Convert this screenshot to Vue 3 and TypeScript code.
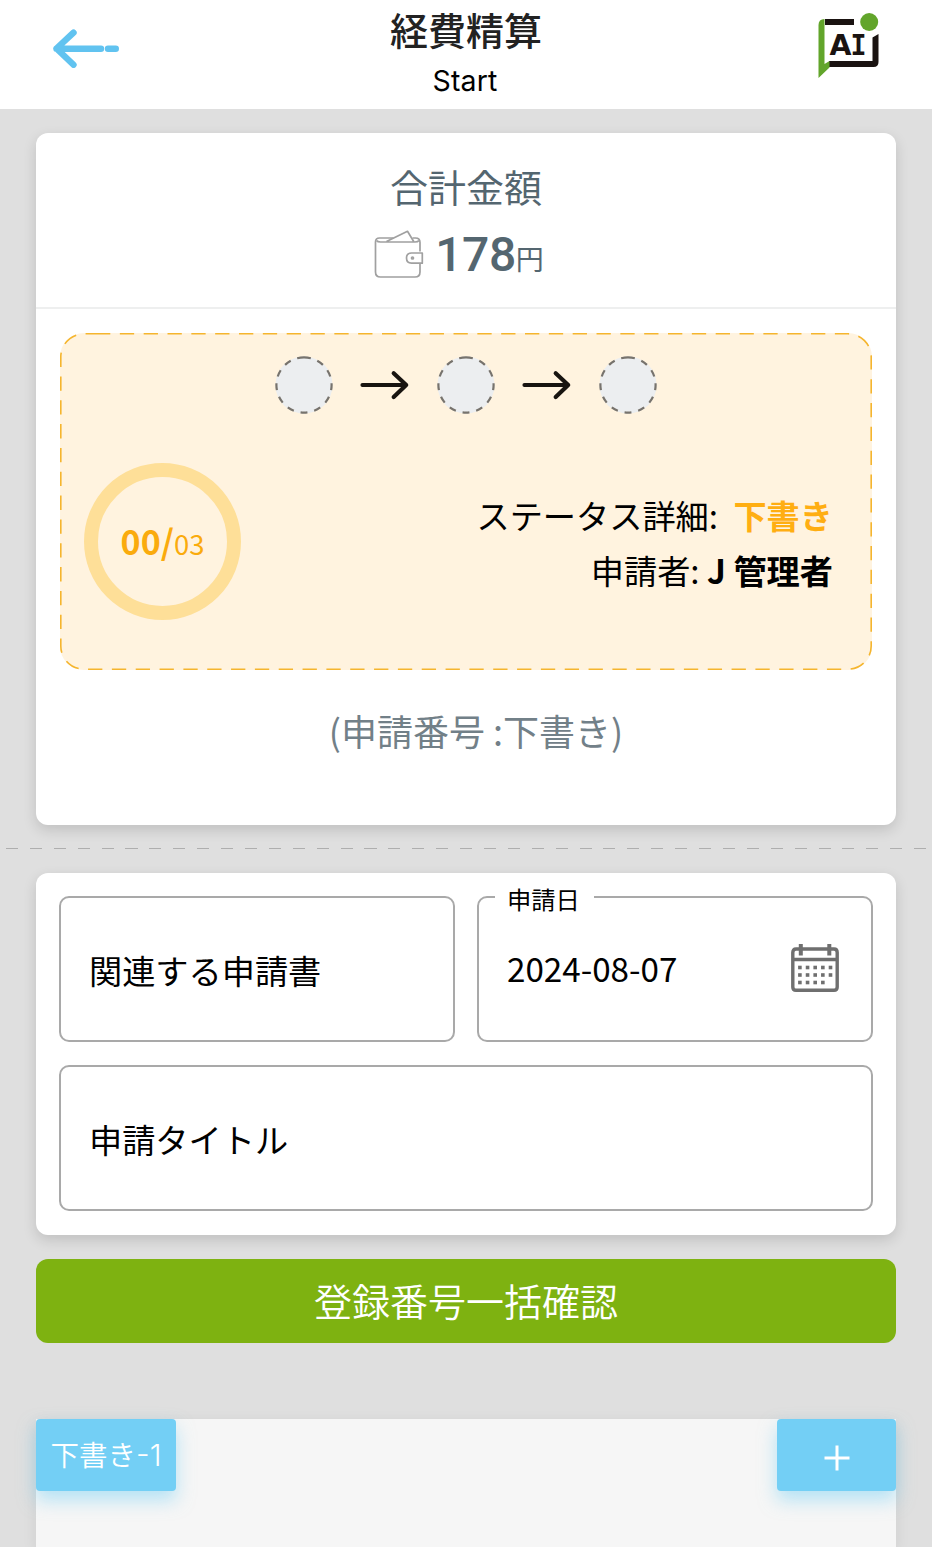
<script setup lang="ts">
import { ref } from 'vue'

interface Step {
  id: number
}

const steps: Step[] = [{ id: 1 }, { id: 2 }, { id: 3 }]
const total = ref<number>(178)
const done = ref<string>('00')
const count = ref<string>('03')
const date = ref<string>('2024-08-07')

const dots: { x: number; y: number }[] = []
for (let row = 0; row < 3; row++) {
  for (let col = 0; col < 5; col++) {
    if (row === 2 && col === 4) continue
    dots.push({ x: 7.1 + col * 7.65, y: 21.7 + row * 7.5 })
  }
}
</script>

<template>
  <div class="page">
    <header class="topbar">
      <svg class="back" width="68" height="40" viewBox="0 0 68 40" fill="none" stroke="#61c3f0" stroke-width="6.4" stroke-linecap="round" stroke-linejoin="round">
        <path d="M22.500 4.700L5.500 20.500L22.500 36.700M5.500 20.700H50M57 20.700H64.800" />
      </svg>
      <div class="heading">
        <h1>経費精算</h1>
        <p>Start</p>
      </div>
      <svg class="logo" width="62" height="68" viewBox="0 0 62 68">
        <path d="M7 6H36V12H7Z" fill="#1a1311" />
        <path d="M54.500 24.500L60.500 21V49Q60.500 54 55.500 54H11V48H54.500Z" fill="#1a1311" />
        <path d="M6.500 6V51L11.500 48V54.500L0.500 65V12Q0.500 6 6.500 6Z" fill="#62a52b" />
        <circle cx="51.200" cy="9" r="9" fill="#62a52b" />
        <text class="logo-a" x="11.600" y="42" textLength="22" lengthAdjust="spacingAndGlyphs">A</text>
        <text class="logo-i" x="32.500" y="42" textLength="16" lengthAdjust="spacingAndGlyphs">I</text>
      </svg>
    </header>

    <section class="card summary">
      <div class="total">
        <h2>合計金額</h2>
        <div class="amount">
          <svg width="50" height="50" viewBox="0 0 50 50" fill="none" stroke="#a0a0a0" stroke-width="1.7" stroke-linejoin="round">
            <path d="M46 21.500V12.500Q46 8 41.500 8H38.500M19.500 8H5.500Q1.500 8 1.500 12V42Q1.500 47 6.500 47H41Q46 47 46 42V33.500" />
            <path d="M2.500 10.500Q3.500 12 6.500 12H41Q44 12 45 10.500M12.500 11.500L33.500 1.300L40 12" />
            <path d="M48.300 23H37.500Q32.500 23 32.500 28T37.500 33.200H48.300Z" />
            <circle cx="38.500" cy="28" r="1" />
          </svg>
          <span class="sum">{{ total }}</span><span class="yen">円</span>
        </div>
      </div>

      <div class="status">
        <svg class="outline" width="812" height="337" viewBox="0 0 812 337" fill="none">
          <path d="M36 .8H788A23.200 23.200 0 0 1 811.200 24V313A23.200 23.200 0 0 1 788 336.200H24A23.200 23.200 0 0 1 .8 313V24A23.200 23.200 0 0 1 24 .8H36" pathLength="2266.500" stroke="#f5b52e" stroke-width="1.600" stroke-dasharray="14.400 9.600" />
        </svg>
        <div class="steps">
          <template v-for="(step, i) in steps" :key="step.id">
            <svg v-if="i > 0" class="arrow" width="50" height="30" viewBox="0 0 50 30" fill="none" stroke="#181410" stroke-width="4.200" stroke-linecap="round" stroke-linejoin="round">
              <path d="M2.500 15H46.200M33.700 3.300L46.200 15L33.700 27" />
            </svg>
            <svg width="58" height="58" viewBox="0 0 58 58">
              <circle cx="29" cy="29" r="28.500" fill="#eceef0" />
              <circle cx="29" cy="29" r="27.600" fill="none" stroke="#77736d" stroke-width="2.200" pathLength="25" stroke-dasharray="1 1" transform="rotate(-90 29 29)" />
            </svg>
          </template>
        </div>
        <div class="detail">
          <div class="ring">
            <b>{{ done }}/</b><span>{{ count }}</span>
          </div>
          <div class="lines">
            <p>ステータス詳細: <b class="draft">下書き</b></p>
            <p class="applicant">申請者: <b>J 管理者</b></p>
          </div>
        </div>
      </div>

      <p class="number">(申請番号 :下書き)</p>
    </section>

    <div class="separator"></div>

    <section class="card form">
      <div class="field"><span>関連する申請書</span></div>
      <div class="field date">
        <label>申請日</label>
        <span>{{ date }}</span>
        <svg width="48" height="49" viewBox="0 0 48 49">
          <path d="M5 5H43Q46.200 5 46.200 8.500V43Q46.200 46.300 43 46.300H5Q1.800 46.300 1.800 43V8.500Q1.800 5 5 5ZM2 15.500H46" fill="none" stroke="#6f6f6f" stroke-width="3.400" />
          <path d="M9.800 0V11.500M38.300 0V11.500" stroke="#6f6f6f" stroke-width="4" />
          <rect v-for="(dot, i) in dots" :key="i" :x="dot.x" :y="dot.y" width="3.600" height="3.600" fill="#6f6f6f" />
        </svg>
      </div>
      <div class="field wide"><span>申請タイトル</span></div>
    </section>

    <button class="confirm" type="button">登録番号一括確認</button>

    <section class="panel">
      <button class="chip tab" type="button"><span>下書き<i>-1</i></span></button>
      <button class="chip add" type="button" aria-label="追加">
        <svg width="26" height="26" viewBox="0 0 26 26" stroke="#fff" stroke-width="3"><path d="M13 .5V25.500M.5 13H25.500" /></svg>
      </button>
    </section>
  </div>
</template>

<style>
body {
  margin: 0;
  background: #dfdfdf;
}
</style>

<style scoped>
.page {
  width: 932px;
  height: 1547px;
  overflow: hidden;
  background: #dfdfdf;
  color: #000;
  font-family: "Noto Sans CJK JP", sans-serif;
  display: flex;
  flex-direction: column;
}
.page * {
  box-sizing: border-box;
}
h1, h2, p {
  margin: 0;
  font-weight: 400;
}
.topbar {
  height: 109px;
  flex: none;
  background: #fff;
  display: grid;
  grid-template-columns: 1fr 300px 1fr;
  padding: 0 52px 0 52px;
}
.back {
  margin-top: 28px;
  margin-left: -1px;
}
.heading {
  text-align: center;
}
h1 {
  font-size: 38px;
  line-height: 56px;
  margin-top: 1px;
  font-weight: 500;
  color: #222;
}
.heading p {
  font: 28.500px/40px Inter, sans-serif;
  letter-spacing: 0.1px;
  margin-top: 4px;
  padding-right: 2px;
}
.logo {
  justify-self: end;
  margin-top: 13px;
}
.logo text {
  font-size: 29px;
  font-weight: 700;
  fill: #1a1311;
}
.logo-a {
  font-family: "DejaVu Sans", sans-serif;
}
.logo-i {
  font-family: "DejaVu Sans Mono", monospace;
}
.card {
  margin: 0 36px;
  flex: none;
  background: #fff;
  border-radius: 12px;
  box-shadow: 0 5px 14px rgba(0, 0, 0, 0.14);
}
.summary {
  margin-top: 24px;
  height: 692px;
}
.total {
  height: 176px;
  border-bottom: 2px solid #eeefef;
  color: #546670;
  text-align: center;
  padding-top: 25px;
}
h2 {
  font-size: 38px;
  line-height: 56px;
}
.amount {
  display: flex;
  justify-content: center;
  height: 64px;
  padding-right: 14px;
}
.amount svg {
  margin: 16px 11px 0 0;
}
.sum {
  font: 500 48px/64px Roboto, sans-serif;
  margin-top: 9px;
  letter-spacing: -0.5px;
}
.yen {
  font-size: 28px;
  line-height: 64px;
  margin-top: 12px;
  width: 28px;
}
.status {
  position: relative;
  margin: 24px 24px 0;
  height: 337px;
  border-radius: 24px;
  background: #fff3df;
}
.outline {
  position: absolute;
  inset: 0;
}
.steps {
  display: flex;
  justify-content: center;
  align-items: center;
  padding-top: 23px;
  gap: 27.200px;
}
.detail {
  display: flex;
  justify-content: space-between;
  padding: 49px 39px 0 24px;
}
.ring {
  width: 157px;
  height: 157px;
  border: 14px solid #fedf98;
  border-radius: 50%;
  color: #faab0d;
  display: flex;
  justify-content: center;
  align-items: baseline;
  line-height: 128px;
}
.ring b {
  font-size: 34px;
}
.ring span {
  font-size: 27.500px;
}
.lines {
  text-align: right;
  font-size: 33.200px;
  line-height: 55px;
  padding-top: 24px;
}
.draft {
  color: #ffae12;
  margin-left: 8px;
}
.number {
  text-align: center;
  font-size: 36px;
  line-height: 52px;
  margin-top: 34px;
  padding-left: 20px;
  color: #728088;
}
.separator {
  flex: none;
  height: 1px;
  margin: 25px 5px 0 6px;
  background: repeating-linear-gradient(90deg, #aeaeae 0 12px, transparent 12px 23.900px);
}
.summary + .separator {
  margin-top: 23px;
}
.form {
  margin-top: 24px;
  height: 362px;
  padding: 23px;
  display: grid;
  grid-template-columns: 1fr 1fr;
  grid-template-rows: 146px 146px;
  gap: 23px 22px;
}
.field {
  border: 2px solid #a9a9a9;
  border-radius: 10px;
  padding: 2px 28px 0;
  display: flex;
  align-items: center;
  font-size: 33.200px;
  line-height: 48px;
  position: relative;
}
.field.wide {
  grid-column: 1 / 3;
}
.field.date {
  justify-content: space-between;
  padding: 0 32px 2px 28px;
}
.date svg {
  margin-top: 1px;
}
.date label {
  position: absolute;
  left: 16px;
  top: -17px;
  height: 36px;
  line-height: 36px;
  padding: 0 12px;
  width: 99px;
  white-space: nowrap;
  background: #fff;
  font-size: 24.300px;
}
.confirm {
  flex: none;
  margin: 24px 36px 0;
  height: 84px;
  border: 0;
  border-radius: 12px;
  background: #7eb211;
  color: #fff;
  font: 350 38px/56px "Noto Sans CJK JP", sans-serif;
  padding: 0 0 2px;
}
.panel {
  margin: 76px 36px 0;
  flex: 1;
  background: #f6f6f6;
  display: flex;
  justify-content: space-between;
  align-items: flex-start;
  box-shadow: 0 4px 14px rgba(0, 0, 0, 0.08);
}
.chip {
  height: 72px;
  border: 0;
  border-radius: 4px;
  background: #73cff5;
  color: #fff;
  box-shadow: 0 9px 18px rgba(115, 207, 245, 0.5);
  padding: 0;
  display: flex;
  align-items: center;
  justify-content: center;
}
.tab {
  width: 140px;
  padding-bottom: 2px;
  font: 350 28.500px/40px "Noto Sans CJK JP", sans-serif;
}
.tab i {
  font: 300 30px/40px Inter, sans-serif;
}
.add {
  width: 119px;
}
.add svg {
  margin-top: 6px;
}
</style>
